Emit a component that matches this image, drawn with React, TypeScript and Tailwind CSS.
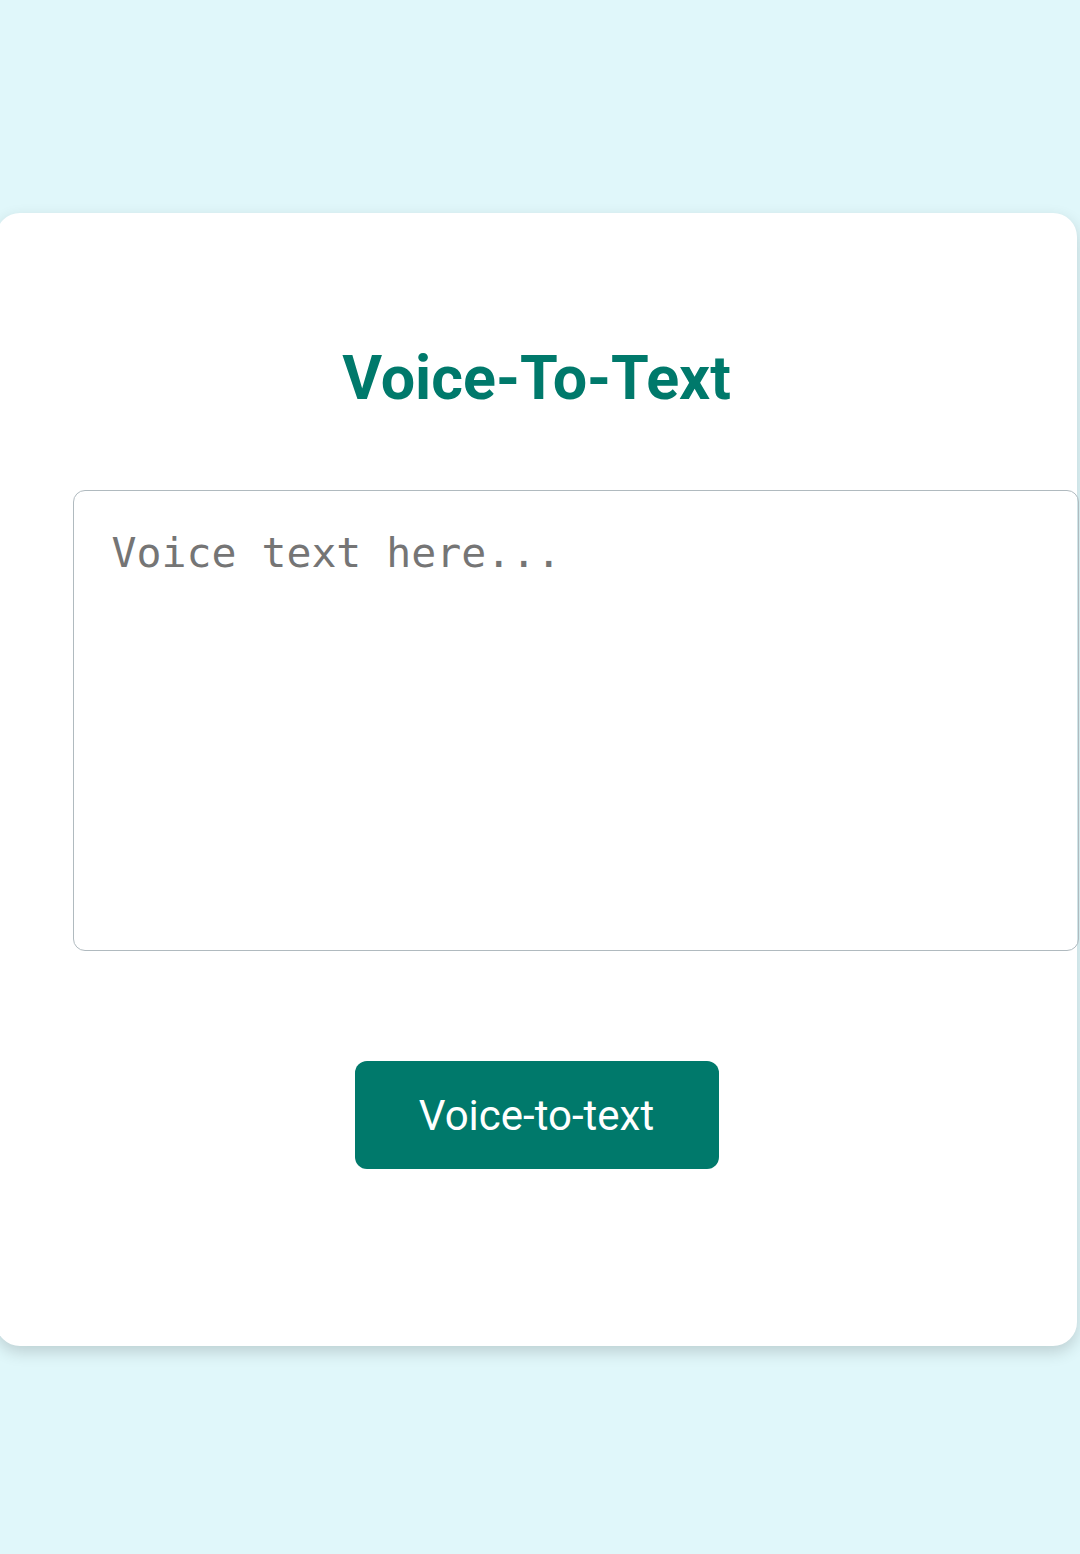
export default function App() {
    return (
        <div className="min-h-[1554px] w-full overflow-hidden bg-[#e0f7fa] pt-[213px]" style={{ fontFamily: "Roboto, 'Liberation Sans', sans-serif" }}>
            <div className="ml-[-4px] flex h-[1133px] w-[1081px] flex-col rounded-[24px] bg-white pt-[135px] shadow-[0_6px_16px_rgba(0,0,0,0.16)]">
                <h1 className="text-center text-[61px] font-bold leading-none text-[#00796b]">Voice-To-Text</h1>
                <textarea
                    className="ml-[77px] mt-[81px] h-[461px] w-[1006px] shrink-0 resize-none rounded-[12px] border-[1.5px] border-[#b0babf] px-[37.5px] pb-[37px] pt-[31px] font-['DejaVu_Sans_Mono',monospace] text-[41.5px] text-[#333] outline-none placeholder:text-[#757575]"
                    placeholder="Voice text here..."
                />
                <div className="mt-[110px] flex justify-center">
                    <button className="h-[108px] w-[364px] rounded-[12px] bg-[#00796b] text-[42px] text-white" type="button">
                        Voice-to-text
                    </button>
                </div>
            </div>
        </div>
    )
}
